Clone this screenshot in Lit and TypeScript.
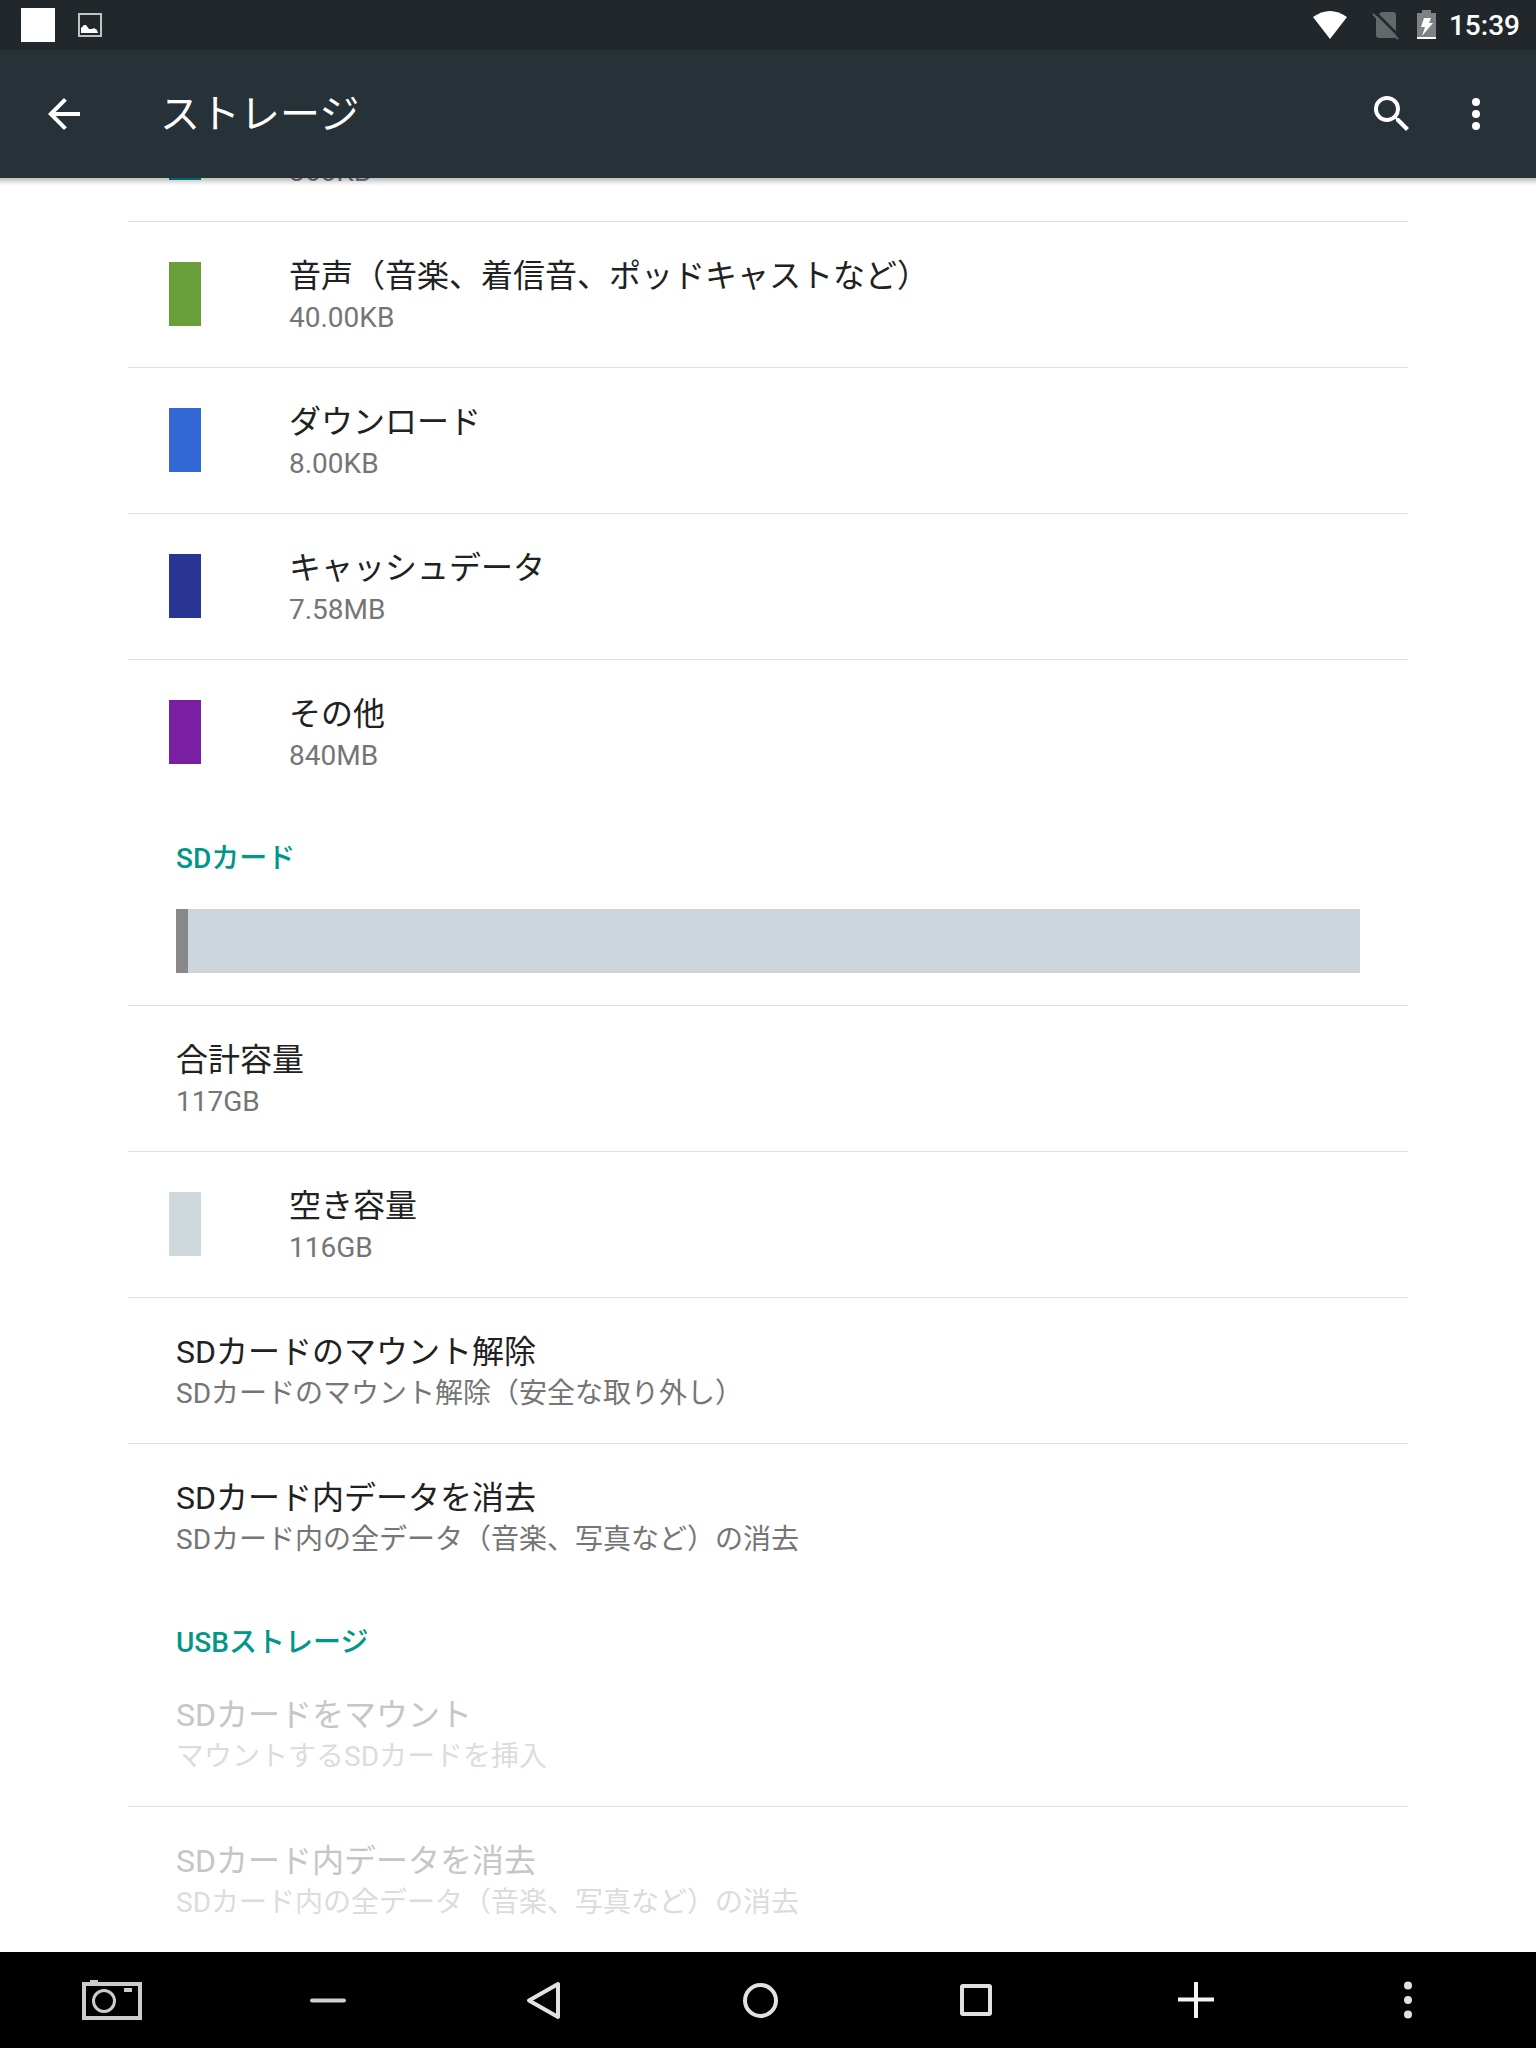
import { LitElement, html, css, svg, nothing } from "lit";
import { customElement, property } from "lit/decorators.js";
import { classMap } from "lit/directives/class-map.js";

interface Entry {
  title?: string;
  summary: string;
  swatch?: string;
  disabled?: boolean;
  action?: boolean;
}

const internalEntries: Entry[] = [
  { summary: "360KB", swatch: "teal" },
  { title: "音声（音楽、着信音、ポッドキャストなど）", summary: "40.00KB", swatch: "green", action: true },
  { title: "ダウンロード", summary: "8.00KB", swatch: "blue", action: true },
  { title: "キャッシュデータ", summary: "7.58MB", swatch: "indigo", action: true },
  { title: "その他", summary: "840MB", swatch: "purple", action: true },
];

const sdEntries: Entry[] = [
  { title: "合計容量", summary: "117GB" },
  { title: "空き容量", summary: "116GB", swatch: "free" },
  { title: "SDカードのマウント解除", summary: "SDカードのマウント解除（安全な取り外し）", action: true },
  { title: "SDカード内データを消去", summary: "SDカード内の全データ（音楽、写真など）の消去", action: true },
];

const usbEntries: Entry[] = [
  { title: "SDカードをマウント", summary: "マウントするSDカードを挿入", action: true, disabled: true },
  { title: "SDカード内データを消去", summary: "SDカード内の全データ（音楽、写真など）の消去", action: true, disabled: true },
];

@customElement("status-bar")
export class StatusBar extends LitElement {
  static styles = css`
    :host {
      display: flex;
      align-items: center;
      height: 50px;
      padding: 0 16px 0 21px;
      background: #21272b;
      color: #fff;
    }
    .notice {
      width: 34px;
      height: 34px;
      margin-right: 20px;
      background: #fff;
    }
    .picture {
      margin-right: auto;
    }
    .time {
      margin-left: 11px;
      padding-top: 2px;
      font-size: 28px;
      font-weight: 500;
      line-height: 40px;
    }
    svg {
      display: block;
    }
  `;

  render() {
    return html`
      <span class="notice"></span>
      <svg class="picture" width="30" height="50" viewBox="0 0 30 50" aria-hidden="true">
        <rect x="4" y="14" width="22" height="22" fill="none" stroke="#c0c3c4" stroke-width="2" />
        <path d="M6 33v-5l3-3 2 0 3 4 3 0 2-1 3 2 1 3v0z" fill="#fff" />
      </svg>
      <svg width="137" height="50" viewBox="0 0 137 50" aria-hidden="true">
        <path d="M12 17Q29 5 46 17L29 39z" fill="#fff" />
        <path d="M83 12h9q3 0 3 3v20q0 3-3 3H78q-3 0-3-3V18q0-1 1-2l3-3q1-1 4-1z" fill="#63686b" />
        <path d="M74 12l25 25" stroke="#21272b" stroke-width="2.500" />
        <path d="M72 14l25 25" stroke="#63686b" stroke-width="2" />
        <path d="M116 13h5v-3h9v3h5v26h-19z" fill="#7e8284" />
        <path d="M116 37h19v2h-19z" fill="#fff" />
        <path d="M123 18h7l-2 5h4l-11 13 3-9h-4z" fill="#fff" />
      </svg>
      <time class="time" datetime="15:39">15:39</time>
    `;
  }
}

@customElement("app-bar")
export class AppBar extends LitElement {
  static styles = css`
    :host {
      display: flex;
      align-items: center;
      gap: 36px;
      height: 128px;
      padding: 0 36px 0 40px;
      background: #263238;
      color: #fff;
      position: relative;
    }
    :host::after {
      content: "";
      position: absolute;
      left: 0;
      right: 0;
      top: 100%;
      height: 8px;
      background: linear-gradient(rgba(0, 0, 0, 0.26), rgba(0, 0, 0, 0.08) 60%, rgba(0, 0, 0, 0));
    }
    .title {
      flex: 1;
      margin: 0 0 0 36px;
      padding-top: 2px;
      font-size: 40px;
      font-weight: 400;
      line-height: 56px;
    }
    .button {
      width: 48px;
      height: 48px;
      padding: 0;
      border: 0;
      background: none;
      color: inherit;
    }
    svg {
      display: block;
      fill: currentColor;
    }
  `;

  render() {
    return html`
      <button class="button" type="button" aria-label="戻る">
        <svg width="48" height="48" viewBox="0 0 24 24">
          <path d="M20 11H7.83l5.59-5.59L12 4l-8 8 8 8 1.41-1.41L7.83 13H20v-2z" />
        </svg>
      </button>
      <h1 class="title">ストレージ</h1>
      <button class="button" type="button" aria-label="検索">
        <svg width="48" height="48" viewBox="0 0 24 24">
          <path
            d="M15.5 14h-.79l-.28-.27A6.47 6.47 0 0 0 16 9.5 6.5 6.5 0 1 0 9.5 16c1.61 0 3.09-.59 4.23-1.57l.27.28v.79l5 4.99L20.49 19l-4.99-5zm-6 0C7.01 14 5 11.99 5 9.5S7.01 5 9.5 5 14 7.01 14 9.5 11.99 14 9.5 14z"
          />
        </svg>
      </button>
      <button class="button" type="button" aria-label="その他のオプション">
        <svg width="48" height="48" viewBox="0 0 24 24">
          <circle cx="12" cy="6" r="2" />
          <circle cx="12" cy="12" r="2" />
          <circle cx="12" cy="18" r="2" />
        </svg>
      </button>
    `;
  }
}

@customElement("storage-list")
export class StorageList extends LitElement {
  static styles = css`
    :host {
      display: block;
    }
    .list {
      margin: 0;
      padding: 0;
      list-style: none;
    }
    .item + .item,
    .list.ruled .item {
      border-top: 1px solid #dfdfdf;
    }
    .row {
      display: flex;
      align-items: flex-start;
      box-sizing: border-box;
      width: 100%;
      margin: 0;
      padding: 32px 48px 29px;
      border: 0;
      background: none;
      font: inherit;
      text-align: left;
      color: #212121;
    }
    .row.keyed {
      padding-left: 41px;
    }
    .swatch {
      flex: none;
      width: 32px;
      height: 64px;
      margin: 8px 88px 0 0;
    }
    .teal {
      background: #00838f;
    }
    .green {
      background: #689f38;
    }
    .blue {
      background: #3367d6;
    }
    .indigo {
      background: #283593;
    }
    .purple {
      background: #7b1fa2;
    }
    .free {
      background: #ced7db;
    }
    .title,
    .summary {
      display: block;
    }
    .title {
      min-height: 44px;
      font-size: 32px;
      line-height: 44px;
    }
    .summary {
      font-size: 28px;
      line-height: 40px;
      color: #757575;
    }
    .row:disabled .title {
      color: #c6c6c6;
    }
    .row:disabled .summary {
      color: #dcdcdc;
    }
  `;

  @property({ attribute: false }) entries: Entry[] = [];
  @property({ type: Boolean }) ruled = false;

  private renderEntry(entry: Entry) {
    const classes = classMap({ row: true, keyed: Boolean(entry.swatch) });
    const content = html`
      ${entry.swatch ? html`<span class="swatch ${entry.swatch}"></span>` : nothing}
      <span>
        <span class="title">${entry.title ?? nothing}</span>
        <span class="summary">${entry.summary}</span>
      </span>
    `;
    return html`<li class="item">
      ${entry.action
        ? html`<button class=${classes} type="button" ?disabled=${entry.disabled}>${content}</button>`
        : html`<div class=${classes}>${content}</div>`}
    </li>`;
  }

  render() {
    return html`<ul class=${classMap({ list: true, ruled: this.ruled })}>
      ${this.entries.map((entry) => this.renderEntry(entry))}
    </ul>`;
  }
}

@customElement("nav-bar")
export class NavBar extends LitElement {
  static styles = css`
    :host {
      display: grid;
      grid-template-columns: repeat(7, 1fr);
      height: 96px;
      padding: 0 20px 0 4px;
      background: #000;
    }
    .key {
      display: flex;
      align-items: center;
      justify-content: center;
      padding: 0;
      border: 0;
      background: none;
      color: #e2e2e2;
    }
    svg {
      fill: none;
      stroke: currentColor;
      stroke-width: 4;
    }
  `;

  private keys = [
    {
      label: "スクリーンショット",
      shape: svg`<g stroke="#cccccc"><path d="M8 8h56v34H8z"/><circle cx="28" cy="25" r="10.500" stroke-width="3"/><path d="M14 5.500h8" stroke-width="3"/><path d="M48 14h8"/></g>`,
    },
    { label: "音量を下げる", shape: svg`<path d="M20 24.500h32" stroke-linecap="round" stroke="#cfcfcf"/>` },
    { label: "戻る", shape: svg`<path d="M21 24.500L50 8v33z" stroke-linejoin="round"/>` },
    { label: "ホーム", shape: svg`<circle cx="36.500" cy="24.500" r="15.500"/>` },
    { label: "最近使ったアプリ", shape: svg`<rect x="22" y="10" width="28" height="28" rx="1" stroke-linejoin="round"/>` },
    { label: "音量を上げる", shape: svg`<path d="M40 6v36M22 23.500h36" stroke="#f4f4f4"/>` },
    {
      label: "メニュー",
      shape: svg`<g fill="currentColor" stroke="none"><circle cx="36" cy="9.500" r="4"/><circle cx="36" cy="24" r="4"/><circle cx="36" cy="38.500" r="4"/></g>`,
    },
  ];

  render() {
    return this.keys.map(
      (key) => html`<button class="key" type="button" aria-label=${key.label}>
        <svg width="72" height="48" viewBox="0 0 72 48">${key.shape}</svg>
      </button>`
    );
  }
}

@customElement("app-root")
export class AppRoot extends LitElement {
  static styles = css`
    :host {
      display: flex;
      flex-direction: column;
      height: 100vh;
      background: #fff;
      font-family: Roboto, "Noto Sans CJK JP", sans-serif;
    }
    status-bar,
    app-bar,
    nav-bar {
      flex: none;
    }
    app-bar {
      z-index: 1;
    }
    .content {
      flex: 1;
      min-height: 0;
      display: flex;
      flex-direction: column;
      justify-content: flex-end;
      overflow: hidden;
      padding: 0 128px;
    }
    .category {
      margin: 0;
      padding: 36px 48px 0;
      font-size: 28px;
      font-weight: 500;
      line-height: 36px;
      color: #009688;
    }
    .usage {
      flex: none;
      display: flex;
      height: 64px;
      margin: 32px 48px;
      background: #ced6dd;
    }
    .used {
      background: #888;
    }
  `;

  @property({ type: Number }) usedPercent = 1;

  render() {
    return html`
      <status-bar></status-bar>
      <app-bar></app-bar>
      <main class="content">
        <storage-list .entries=${internalEntries}></storage-list>
        <h2 class="category">SDカード</h2>
        <div class="usage" role="img" aria-label="SDカードの使用量">
          <span class="used" style="width: ${this.usedPercent}%"></span>
        </div>
        <storage-list ruled .entries=${sdEntries}></storage-list>
        <h2 class="category">USBストレージ</h2>
        <storage-list .entries=${usbEntries}></storage-list>
      </main>
      <nav-bar></nav-bar>
    `;
  }
}
